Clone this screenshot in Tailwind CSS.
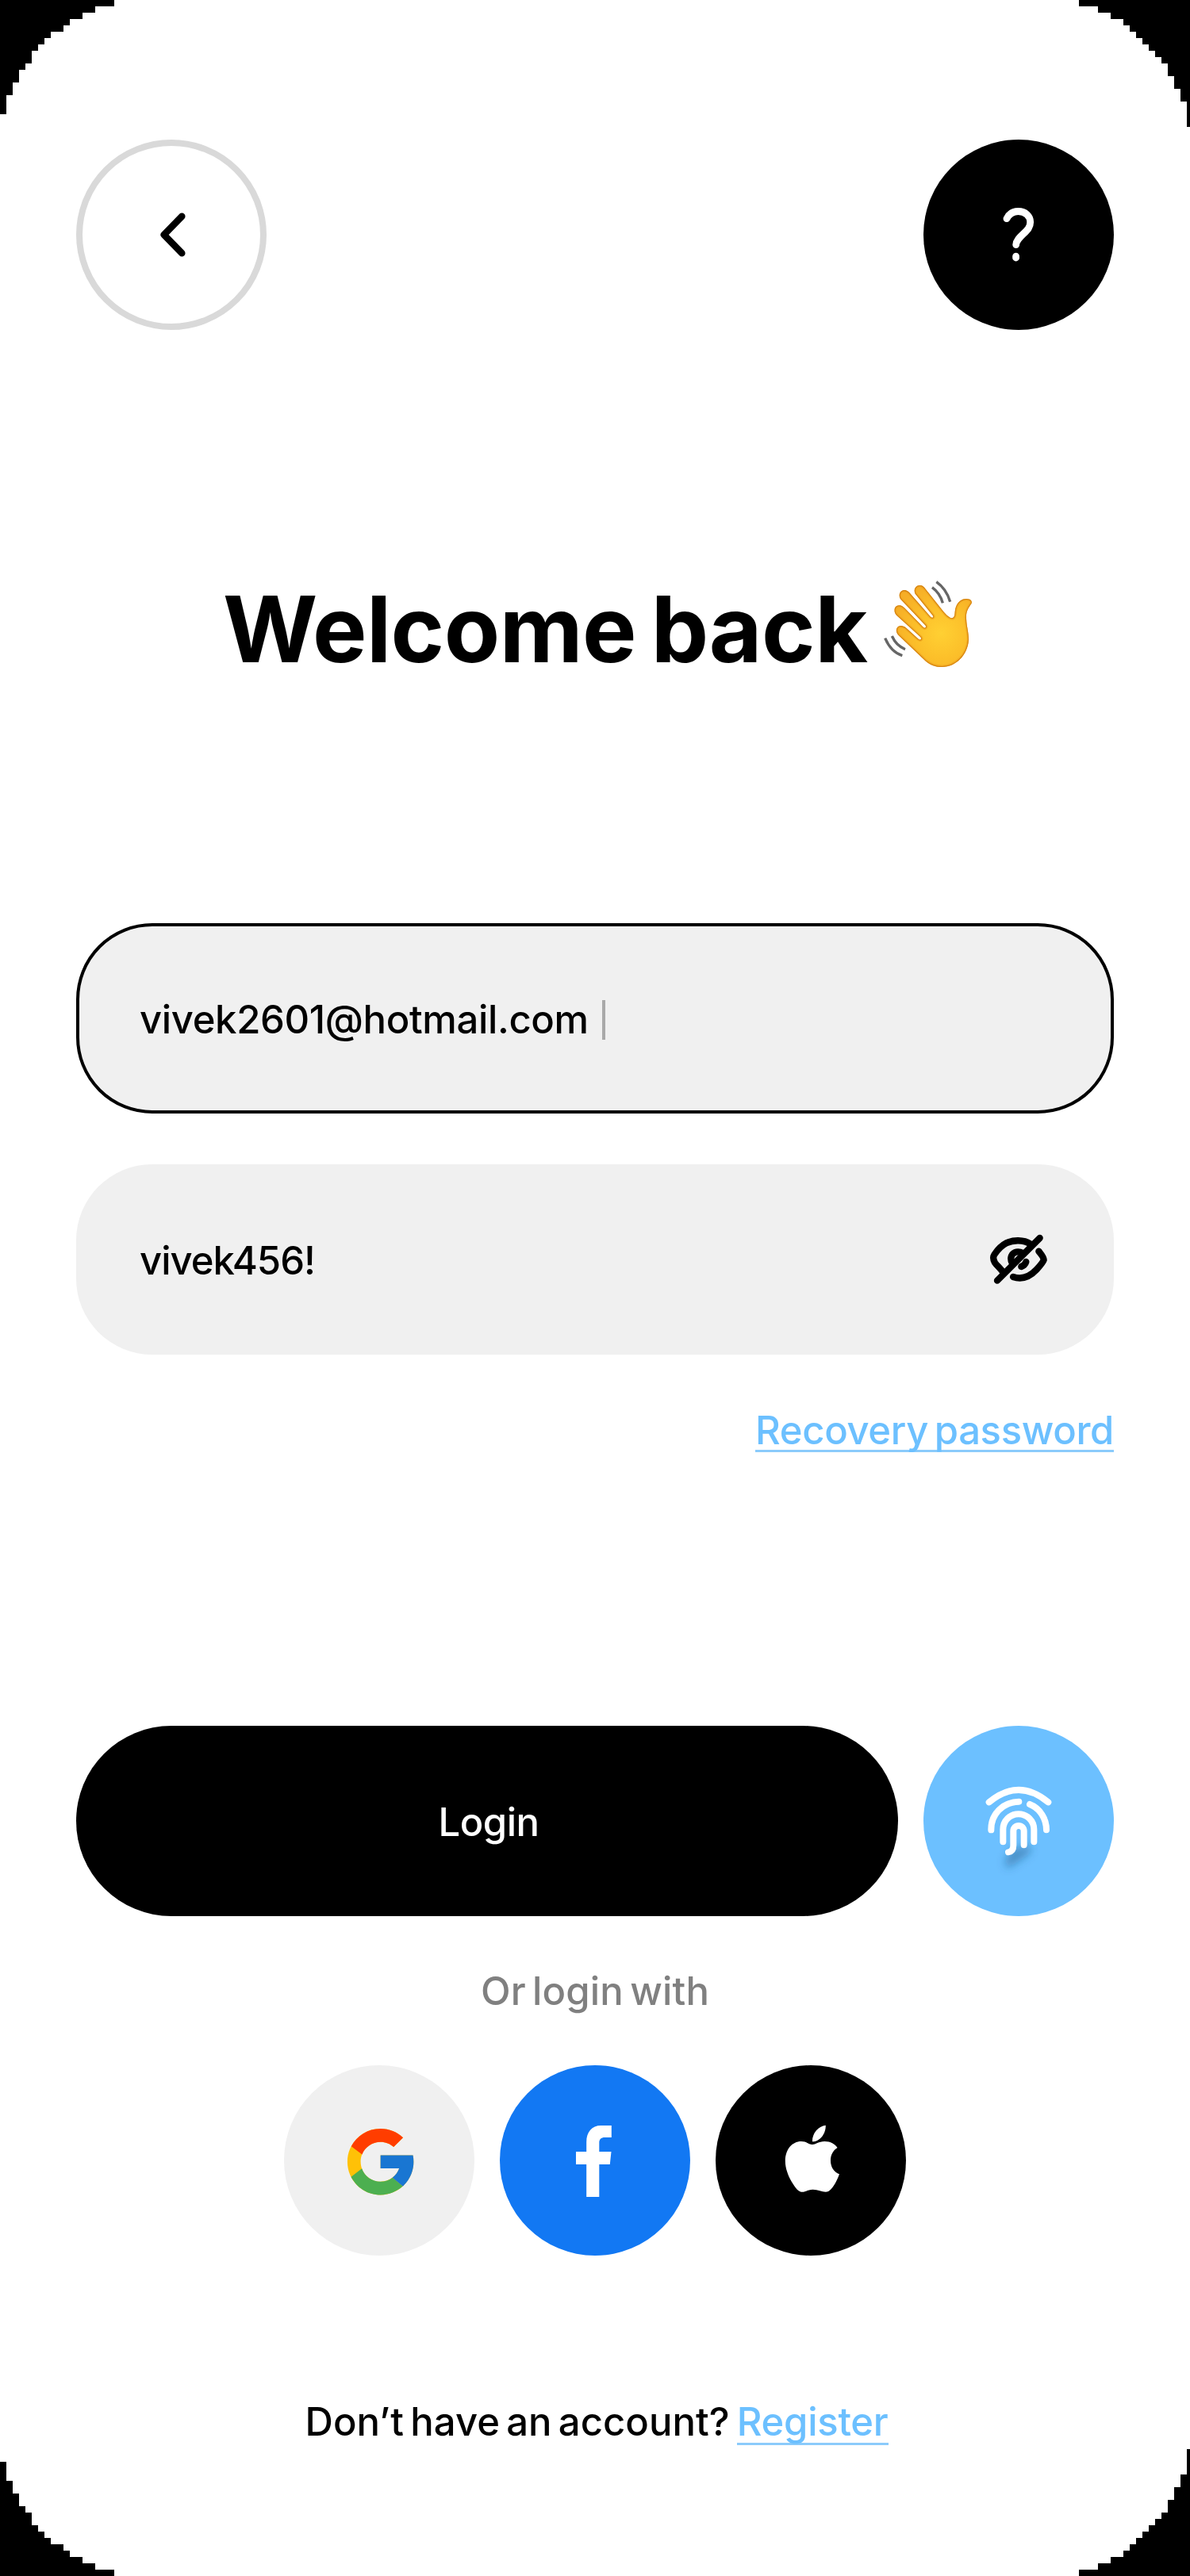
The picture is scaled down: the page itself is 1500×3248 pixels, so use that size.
<!DOCTYPE html>
<html lang="en">
<head>
<meta charset="utf-8">
<title>Login</title>
<script src="https://cdn.jsdelivr.net/npm/@tailwindcss/browser@4"></script>
</head>
<body class="bg-white font-['Inter','Liberation_Sans',sans-serif] text-[49px] font-medium leading-[60px] text-black [word-spacing:-5px]">
<main class="relative flex h-[3248px] w-[1500px] flex-col overflow-hidden bg-white px-24 pt-44">

  <!-- stepped screen corners -->
  <svg class="pointer-events-none absolute inset-0" width="1500" height="3248" viewBox="0 0 1500 3248" shape-rendering="crispEdges" aria-hidden="true">
    <path d="M0 0H144V8H120V16H104V24H88V32H80V40H64V48H56V56H48V64H40V80H32V88H24V104H16V120H8V144H0Z"/>
    <path d="M1500 0H1360V8H1384V16H1400V24H1416V32H1424V40H1432V48H1440V56H1448V64H1456V72H1464V80H1472V96H1480V112H1488V128H1496V160H1500Z"/>
    <path d="M0 3104H8V3128H16V3144H24V3160H32V3168H40V3184H48V3192H56V3200H64V3208H80V3216H88V3224H104V3232H120V3240H144V3248H0Z"/>
    <path d="M1500 3088H1496V3120H1488V3136H1480V3152H1472V3168H1464V3176H1456V3184H1448V3192H1440V3200H1432V3208H1424V3216H1416V3224H1400V3232H1384V3240H1360V3248H1500Z"/>
  </svg>

  <header class="flex justify-between">
    <button class="size-60 rounded-full border-8 border-[#d9d9d9]" aria-label="Back">
      <svg class="size-56" viewBox="8 8 224 224" fill="none" stroke="#000" stroke-width="8.5" stroke-linecap="round" stroke-linejoin="round"><path d="M133.3 96.7L110.7 120L133.3 143.3"/></svg>
    </button>
    <button class="size-60 rounded-full bg-black" aria-label="Help">
      <svg class="size-60" viewBox="0 0 240 240" fill="none" stroke="#fff" stroke-width="8.8" stroke-linecap="round"><path d="M105 99.7C108 93.500 113 90.500 119.500 90.500C128.500 90.500 134.700 96.500 134.700 104C134.700 110.500 131 114 126.500 118.300C121 123.500 116.700 127.500 116.700 132.600"/><path d="M116.600 147.200V149"/></svg>
    </button>
  </header>

  <h1 class="mt-[318px] flex items-start pl-[185px] text-[115px] font-bold leading-[120px] tracking-[-0.55px] [word-spacing:-8px]">
    <span class="whitespace-nowrap">Welcome back</span>
    <svg class="-mt-[14px] ml-[6px] size-[140px] shrink-0" viewBox="0 0 420 420" role="img" aria-label="Waving hand">
      <defs>
        <radialGradient id="skin" gradientUnits="userSpaceOnUse" cx="262" cy="235" r="190"><stop offset="0" stop-color="#ffd033"/><stop offset=".5" stop-color="#fcc02a"/><stop offset="1" stop-color="#f6ae26"/></radialGradient>
        <clipPath id="hand"><path id="h" d="M164 86C156 70 166 54 181 54C191 54 197 60 203 68L268 150C281 167 295 178 303 178C316 176 312 160 316 142C322 116 342 104 358 105C374 106 381 114 376 124C366 138 355 152 357 180C358 210 366 230 366 260C362 320 316 362 266 363C240 363 222 356 204 341L100 242C90 232 90 215 101 209C112 205 120 209 128 214L176 257C184 263 190 258 184 250L94 168C82 156 83 139 94 132C106 126 116 132 124 140L194 212C201 219 208 212 203 206L110 108C101 98 103 82 112 76C124 68 134 74 142 82L222 173C229 180 235 174 230 168Z"/></clipPath>
      </defs>
      <use href="#h" fill="url(#skin)"/>
      <g clip-path="url(#hand)"><use href="#h" fill="none" stroke="#e99a1c" stroke-opacity=".5" stroke-width="14"/><use href="#h" fill="none" stroke="#c9760c" stroke-opacity=".75" stroke-width="6"/></g>
      <g fill="none" stroke="#666" stroke-width="10"><path d="M228 62Q258 84 268 121"/><path d="M244 41Q282 68 296 116"/><path d="M76 246Q92 282 126 296"/><path d="M50 254Q72 306 115 320"/></g>
    </svg>
  </h1>

  <form class="mt-[304px] flex flex-col">
    <div class="flex h-60 items-center rounded-[96px] border-4 border-black bg-[#f0f0f0] pl-[76px]">
      <span class="pt-1 tracking-[-0.35px]">vivek2601@hotmail.com</span>
      <span class="mt-1 ml-[17px] h-[50px] w-1 bg-[#a9a9a9]"></span>
    </div>
    <div class="mt-16 flex h-60 items-center justify-between rounded-[96px] bg-[#f0f0f0] pl-20">
      <span class="pt-1 tracking-[-1px]">vivek456!</span>
      <svg class="size-60" viewBox="12 24 720 720" fill="none" stroke="#000" stroke-width="25" stroke-linecap="round" stroke-linejoin="round" aria-label="Hide password">
        <path d="M452 303L291 464"/>
        <path d="M418 326C390 308 350 310 326 322C306 332 288 354 280 366C273 377 276 385 282 396C290 408 304 418 314 434"/>
        <path d="M448 353C455 362 467 374 467 386C464 396 452 409 440 422C412 452 380 460 351 450"/>
        <path d="M388 360C366 349 346 358 343 378C342 390 346 396 350 402"/>
        <path d="M400 393Q396 406 382 411"/>
      </svg>
    </div>
    <a class="mt-[66px] self-end whitespace-nowrap text-[#6cc0ff]"><span class="block h-[57px] border-b-[3px] border-[#8bcbfb] tracking-[-0.35px]">Recovery password</span></a>

    <div class="mt-[345px] flex gap-8">
      <button type="button" class="flex h-60 w-[1036px] items-center justify-center rounded-full bg-black pt-1 pl-1 tracking-[-0.5px] text-white">Login</button>
      <button type="button" class="size-60 rounded-full bg-[#6cc0ff]" aria-label="Log in with fingerprint">
        <svg class="size-60" viewBox="42 48 720 720" fill="none" stroke="#fff" stroke-width="24" stroke-linecap="round" stroke-linejoin="round">
          <defs><filter id="soft" x="-50%" y="-50%" width="200%" height="200%"><feGaussianBlur stdDeviation="16"/></filter></defs>
          <path d="M374 515L452 500L442 532L395 565L358 588L350 560Z" fill="#1d4d78" fill-opacity=".42" stroke="none" filter="url(#soft)"/>
          <path d="M290 337Q402 244 514 337"/>
          <path d="M298 442C297 382 342 337 403 335"/>
          <path d="M444 345C483 360 507 400 507 442"/>
          <path d="M343 487V440A58.500 58.500 0 0 1 460 440V487"/>
          <path d="M422 499V446A20 20 0 0 0 382 446V500C382 515 375 524 363 526"/>
        </svg>
      </button>
    </div>
  </form>

  <p class="mt-[65px] text-center tracking-[0.17px] text-[#808080]">Or login with</p>

  <div class="mt-[63px] flex justify-center gap-8">
    <button class="size-60 rounded-full bg-[#f0f0f0]" aria-label="Google">
      <svg class="size-60" viewBox="0 0 240 240"><g transform="translate(71.600 71.700) scale(2.085)">
        <path fill="#FFC107" d="M43.611 20.083H42V20H24v8h11.303c-1.649 4.657-6.080 8-11.303 8-6.627 0-12-5.373-12-12s5.373-12 12-12c3.059 0 5.842 1.154 7.961 3.039l5.657-5.657C34.046 6.053 29.268 4 24 4 12.955 4 4 12.955 4 24s8.955 20 20 20 20-8.955 20-20c0-1.341-.138-2.650-.389-3.917z"/>
        <path fill="#FF3D00" d="M6.306 14.691l6.571 4.819C14.655 15.108 18.961 12 24 12c3.059 0 5.842 1.154 7.961 3.039l5.657-5.657C34.046 6.053 29.268 4 24 4 16.318 4 9.656 8.337 6.306 14.691z"/>
        <path fill="#4CAF50" d="M24 44c5.166 0 9.860-1.977 13.409-5.192l-6.190-5.238C29.211 35.091 26.715 36 24 36c-5.202 0-9.619-3.317-11.283-7.946l-6.522 5.025C9.505 39.556 16.227 44 24 44z"/>
        <path fill="#1976D2" d="M43.611 20.083H42V20H24v8h11.303c-.792 2.237-2.231 4.166-4.087 5.571l6.193 5.238C36.971 39.205 44 34 44 24c0-1.341-.138-2.650-.389-3.917z"/>
      </g></svg>
    </button>
    <button class="size-60 rounded-full bg-[#1278f3]" aria-label="Facebook">
      <svg class="size-60" viewBox="0 0 240 240" fill="#fff"><path d="M109.200 166V125H96V109H109.200V97C109.200 84 116 76 127.500 76H140.800V91H132.500C127.500 91 125.300 93.300 125.300 98V109H140.500L138.800 125H125.300V166Z"/></svg>
    </button>
    <button class="size-60 rounded-full bg-black" aria-label="Apple">
      <svg class="size-60" viewBox="819 42 697 720" preserveAspectRatio="none" fill="#fff">
        <path d="M1173 331C1172 300 1195 272 1222 269C1223 302 1200 331 1173 331Z"/>
        <path d="M1173 342C1185 342 1196 330 1218 330C1240 330 1256 340 1265 354C1248 365 1240 382 1240 403C1240 428 1253 447 1272 454C1262 484 1245 512 1232 519C1215 526 1198 512 1175 512C1155 512 1145 524 1132 521C1118 518 1108 500 1098 484C1085 460 1074 432 1074 404C1074 362 1098 330 1133 330C1152 330 1162 342 1173 342Z"/>
      </svg>
    </button>
  </div>

  <p class="mt-[180px] flex justify-center gap-[9px] whitespace-nowrap pl-1">
    <span class="tracking-[0.07px]">Don’t have an account?</span>
    <a class="h-[59px] border-b-[3px] border-[#8bcbfb] tracking-[-0.27px] text-[#6cc0ff]">Register</a>
  </p>
</main>
</body>
</html>
